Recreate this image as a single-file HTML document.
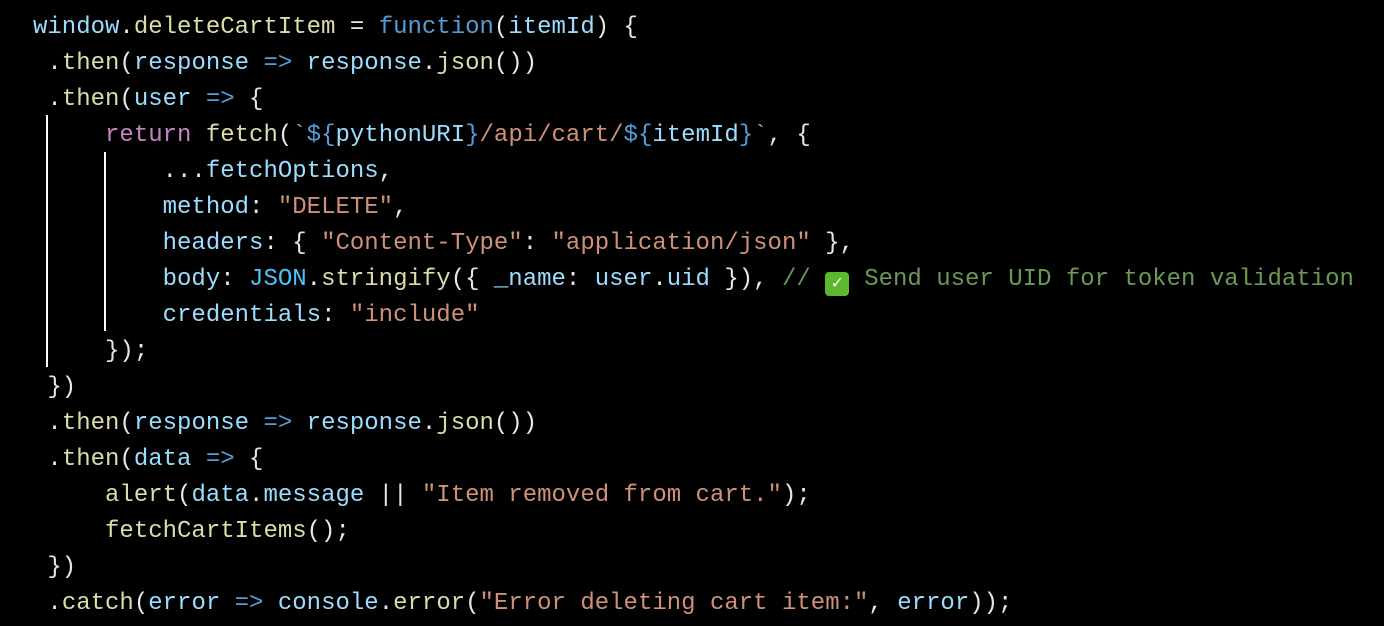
<!DOCTYPE html>
<html><head><meta charset="utf-8"><style>
html,body{margin:0;padding:0;background:#000;width:1384px;height:626px;overflow:hidden}
pre{margin:0;position:absolute;left:33px;top:10px;font-family:"Liberation Mono","DejaVu Sans Mono",monospace;font-size:24px;line-height:36px;color:#e6e6e6;white-space:pre}
.v{color:#9cdcfe}.f{color:#dcdcaa}.k{color:#569cd6}.c{color:#c586c0}.s{color:#ce9178}.m{color:#6a9955}.j{color:#4fc1ff}
.g{position:absolute;width:2px;background:#fff}
.e{display:inline-block;width:24px;height:24px;background:#5cb82e;border-radius:4px;color:#fff;font-size:18px;line-height:24px;text-align:center;vertical-align:-3px;margin-right:15px;font-weight:bold}
</style></head><body>
<div class="g" style="left:46px;top:115px;height:252px"></div>
<div class="g" style="left:104px;top:152px;height:179px"></div>
<pre><span class="v">window</span>.<span class="f">deleteCartItem</span> = <span class="k">function</span>(<span class="v">itemId</span>) {
 .<span class="f">then</span>(<span class="v">response</span> <span class="k">=&gt;</span> <span class="v">response</span>.<span class="f">json</span>())
 .<span class="f">then</span>(<span class="v">user</span> <span class="k">=&gt;</span> {
     <span class="c">return</span> <span class="f">fetch</span>(<span class="s">`</span><span class="k">${</span><span class="v">pythonURI</span><span class="k">}</span><span class="s">/api/cart/</span><span class="k">${</span><span class="v">itemId</span><span class="k">}</span><span class="s">`</span>, {
         ...<span class="v">fetchOptions</span>,
         <span class="v">method</span>: <span class="s">"DELETE"</span>,
         <span class="v">headers</span>: { <span class="s">"Content-Type"</span>: <span class="s">"application/json"</span> },
         <span class="v">body</span>: <span class="j">JSON</span>.<span class="f">stringify</span>({ <span class="v">_name</span>: <span class="v">user</span>.<span class="v">uid</span> }), <span class="m">// <span class="e">✓</span>Send user UID for token validation</span>
         <span class="v">credentials</span>: <span class="s">"include"</span>
     });
 })
 .<span class="f">then</span>(<span class="v">response</span> <span class="k">=&gt;</span> <span class="v">response</span>.<span class="f">json</span>())
 .<span class="f">then</span>(<span class="v">data</span> <span class="k">=&gt;</span> {
     <span class="f">alert</span>(<span class="v">data</span>.<span class="v">message</span> || <span class="s">"Item removed from cart."</span>);
     <span class="f">fetchCartItems</span>();
 })
 .<span class="f">catch</span>(<span class="v">error</span> <span class="k">=&gt;</span> <span class="v">console</span>.<span class="f">error</span>(<span class="s">"Error deleting cart item:"</span>, <span class="v">error</span>));</pre>
</body></html>
